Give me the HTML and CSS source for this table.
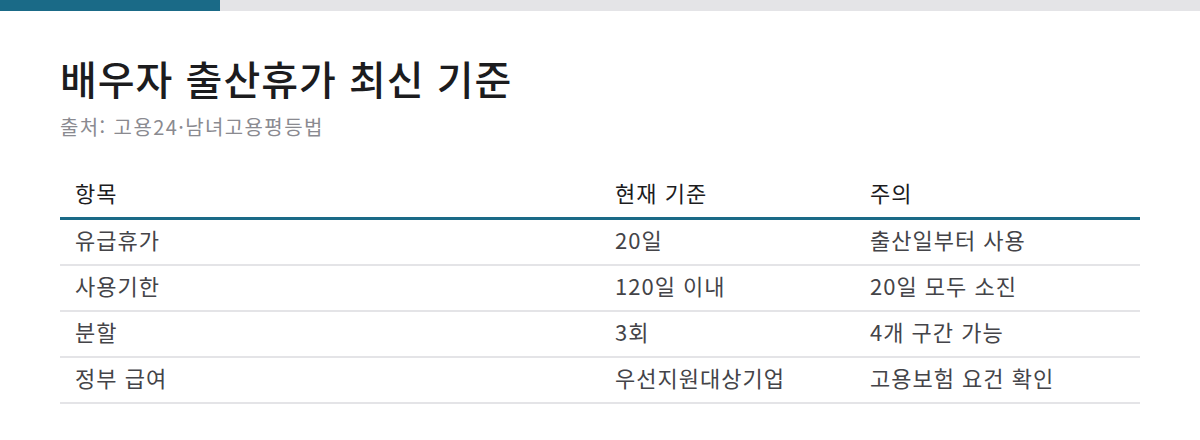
FILE: index.html
```html
<!DOCTYPE html>
<html lang="ko">
<head>
<meta charset="utf-8">
<title>배우자 출산휴가 최신 기준</title>
<link rel="stylesheet" href="styles.css">
</head>
<body>
<div class="topbar"><div class="progress"></div></div>
<main class="wrap">
  <h1 class="title">배우자 출산휴가 최신 기준</h1>
  <p class="source">출처: 고용24·남녀고용평등법</p>
  <table class="grid">
    <colgroup>
      <col class="c1"><col class="c2"><col class="c3">
    </colgroup>
    <thead>
      <tr><th>항목</th><th>현재 기준</th><th>주의</th></tr>
    </thead>
    <tbody>
      <tr><td>유급휴가</td><td>20일</td><td>출산일부터 사용</td></tr>
      <tr><td>사용기한</td><td>120일 이내</td><td>20일 모두 소진</td></tr>
      <tr><td>분할</td><td>3회</td><td>4개 구간 가능</td></tr>
      <tr><td>정부 급여</td><td>우선지원대상기업</td><td>고용보험 요건 확인</td></tr>
    </tbody>
  </table>
</main>
</body>
</html>
```
FILE: styles.css
```css
html, body {
  margin: 0;
  padding: 0;
  background: #ffffff;
}
body {
  font-family: "Noto Sans CJK KR", "Noto Sans", sans-serif;
  color: #222222;
}
.topbar {
  height: 11px;
  background: #e4e4e7;
  display: flex;
}
.progress {
  width: 220px;
  background: #1a6a87;
}
.wrap {
  padding: 0 60px;
}
.title {
  margin: 41px 0 0;
  font-size: 40px;
  line-height: 52px;
  font-weight: 500;
  letter-spacing: 1px;
  color: #1c1c1e;
}
.source {
  margin: 10px 0 0;
  font-size: 20px;
  line-height: 26px;
  letter-spacing: 1.4px;
  color: #8a8a90;
}
.grid {
  width: 100%;
  margin-top: 33px;
  border-collapse: collapse;
  table-layout: fixed;
}
.c1 { width: 540px; }
.c2 { width: 255px; }
.c3 { width: 285px; }
.grid th {
  text-align: left;
  font-weight: 400;
  font-size: 22px;
  letter-spacing: 1px;
  color: #1c1c1e;
  padding: 0 15px 6px;
  line-height: 38px;
  border-bottom: 3px solid #1a6a87;
}
.grid td {
  font-size: 22px;
  letter-spacing: 1px;
  color: #444448;
  padding: 0 15px 6px;
  line-height: 38px;
  border-bottom: 2px solid #e4e4e7;
}
```
